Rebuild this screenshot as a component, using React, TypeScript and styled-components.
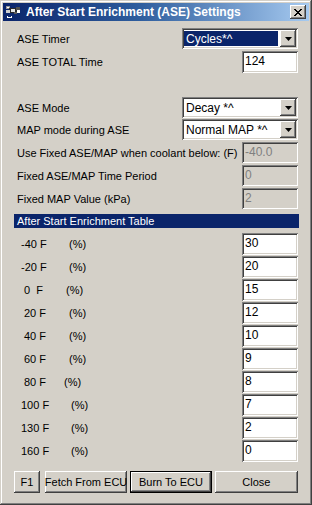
import React from 'react';
import styled, { createGlobalStyle, css } from 'styled-components';

const Global = createGlobalStyle`
  html, body { margin: 0; padding: 0; background: #D4D0C8; }
  body {
    font-family: "Liberation Sans", Arial, sans-serif;
    font-size: 11px;
    color: #000;
  }
`;

const raised = css`
  box-shadow:
    inset -1px -1px #404040,
    inset 1px 1px #FFFFFF,
    inset -2px -2px #808080,
    inset 2px 2px #D4D0C8;
`;

const sunken = css`
  box-shadow:
    inset 1px 1px #808080,
    inset -1px -1px #FFFFFF,
    inset 2px 2px #404040,
    inset -2px -2px #D4D0C8;
`;

const Window = styled.div`
  width: 312px;
  height: 505px;
  box-sizing: border-box;
  padding: 3px;
  background: #D4D0C8;
  display: flex;
  flex-direction: column;
  box-shadow:
    inset -1px -1px #404040,
    inset 1px 1px #D4D0C8,
    inset -2px -2px #808080,
    inset 2px 2px #FFFFFF;
`;

const TitleBar = styled.div`
  height: 18px;
  flex: none;
  display: flex;
  align-items: center;
  padding: 0 3px 0 2px;
  background: linear-gradient(to right, #0A246A 0%, #2F5E9E 45%, #A6CAF0 100%);
  color: #fff;
`;

const TitleText = styled.span`
  font-family: "Liberation Sans", Arial, sans-serif;
  font-weight: bold;
  font-size: 12px;
  margin-left: 5px;
  flex: 1;
  white-space: nowrap;
`;

const CloseButton = styled.div`
  width: 16px;
  height: 14px;
  background: #D4D0C8;
  display: flex;
  align-items: center;
  justify-content: center;
  ${raised}
`;

const Content = styled.div`
  flex: 1;
  display: flex;
  flex-direction: column;
  padding: 0 11px;
`;

const Row = styled.div<{ $mt: number; $h: number }>`
  display: flex;
  align-items: center;
  justify-content: space-between;
  margin-top: ${p => p.$mt}px;
  height: ${p => p.$h}px;
`;

const Label = styled.span`
  padding-left: 3px;
  white-space: nowrap;
`;

const Edit = styled.div<{ $disabled?: boolean }>`
  width: 56px;
  height: 100%;
  box-sizing: border-box;
  padding: 3px 3px 0 3px;
  background: ${p => (p.$disabled ? '#D4D0C8' : '#FFFFFF')};
  color: ${p => (p.$disabled ? '#808080' : '#000')};
  font-size: 12px;
  line-height: 15px;
  ${sunken}
`;

const Combo = styled.div`
  width: 116px;
  height: 100%;
  box-sizing: border-box;
  padding: 2px;
  background: #fff;
  display: flex;
  ${sunken}
`;

const ComboText = styled.div<{ $selected?: boolean }>`
  flex: 1;
  margin: 1px 2px 1px 0;
  padding-left: 2px;
  display: flex;
  align-items: center;
  font-size: 12px;
  background: ${p => (p.$selected ? '#0A246A' : 'transparent')};
  color: ${p => (p.$selected ? '#fff' : '#000')};
  white-space: nowrap;
`;

const DropButton = styled.div`
  width: 16px;
  background: #D4D0C8;
  display: flex;
  align-items: center;
  justify-content: center;
  ${raised}
`;

const Header = styled.div`
  margin-top: 5px;
  margin-right: -1px;
  height: 14px;
  background: #0A246A;
  color: #fff;
  padding-left: 3px;
  display: flex;
  align-items: center;
  white-space: nowrap;
`;

const Table = styled.div`
  margin-top: 5px;
  display: flex;
  flex-direction: column;
  gap: 1px;
`;

const TableRow = styled.div`
  height: 22px;
  display: flex;
  align-items: center;
`;

const TempLabel = styled.span<{ $left: number; $width: number }>`
  margin-left: ${p => p.$left}px;
  width: ${p => p.$width}px;
  white-space: pre;
  flex: none;
`;

const PctLabel = styled.span`
  flex: 1;
  white-space: nowrap;
`;

const ButtonBar = styled.div`
  margin-top: 9px;
  height: 22px;
  display: flex;
  gap: 3px;
`;

const Button = styled.div<{ $w: number; $default?: boolean; $mr?: number }>`
  width: ${p => p.$w}px;
  margin-right: ${p => p.$mr ?? 0}px;
  box-sizing: border-box;
  background: #D4D0C8;
  display: flex;
  align-items: center;
  justify-content: center;
  font-size: 11px;
  white-space: nowrap;
  ${p =>
    p.$default
      ? css`
          box-shadow:
            inset 0 0 0 1px #000,
            inset -2px -2px #404040,
            inset 2px 2px #FFFFFF,
            inset -3px -3px #808080;
        `
      : raised}
`;

const Arrow = () => (
  <svg width="7" height="4" viewBox="0 0 7 4">
    <path d="M0 0h7L3.5 4z" fill="#000" />
  </svg>
);

const AppIcon = () => (
  <svg width="16" height="16" viewBox="0 0 16 16" shapeRendering="crispEdges">
    <rect x="1" y="2" width="4" height="3" fill="#9A9A9A" />
    <rect x="2" y="3" width="2" height="1" fill="#FFFFFF" />
    <rect x="4" y="4" width="9" height="5" fill="#2A2A2A" />
    <rect x="1" y="6" width="4" height="3" fill="#D0D0D0" />
    <rect x="6" y="5" width="4" height="3" fill="#E6E6E6" />
    <rect x="11" y="3" width="4" height="3" fill="#505050" />
    <rect x="12" y="6" width="3" height="3" fill="#FFFFFF" />
    <rect x="9" y="8" width="3" height="2" fill="#5A5A5A" />
    <rect x="2" y="12" width="1" height="2" fill="#FFFFFF" />
    <rect x="2" y="13" width="5" height="1" fill="#FFFFFF" />
    <rect x="6" y="12" width="1" height="1" fill="#FFFFFF" />
  </svg>
);

const CloseX = () => (
  <svg width="8" height="7" viewBox="0 0 8 7" shapeRendering="crispEdges">
    <path
      d="M0 0h2v1h1v1h2V1h1V0h2v1H7v1H6v1H5v1h1v1h1v1h1v1H6V6H5V5H3v1H2v1H0V6h1V5h1V4h1V3H2V2H1V1H0z"
      fill="#000"
    />
  </svg>
);

const rows: { t: string; v: string; left: number; w: number }[] = [
  { t: '-40 F', v: '30', left: 7, w: 48 },
  { t: '-20 F', v: '20', left: 7, w: 48 },
  { t: '0  F', v: '15', left: 10, w: 42 },
  { t: '20 F', v: '12', left: 10, w: 45 },
  { t: '40 F', v: '10', left: 10, w: 45 },
  { t: '60 F', v: '9', left: 10, w: 45 },
  { t: '80 F', v: '8', left: 10, w: 40 },
  { t: '100 F', v: '7', left: 7, w: 50 },
  { t: '130 F', v: '2', left: 7, w: 50 },
  { t: '160 F', v: '0', left: 7, w: 50 },
];

export default function App() {
  return (
    <>
      <Global />
      <Window>
        <TitleBar>
          <AppIcon />
          <TitleText>After Start Enrichment (ASE) Settings</TitleText>
          <CloseButton>
            <CloseX />
          </CloseButton>
        </TitleBar>
        <Content>
          <Row $mt={7} $h={21}>
            <Label>ASE Timer</Label>
            <Combo>
              <ComboText $selected>Cycles*^</ComboText>
              <DropButton>
                <Arrow />
              </DropButton>
            </Combo>
          </Row>
          <Row $mt={2} $h={22}>
            <Label>ASE TOTAL Time</Label>
            <Edit>124</Edit>
          </Row>
          <Row $mt={24} $h={21}>
            <Label>ASE Mode</Label>
            <Combo>
              <ComboText>Decay *^</ComboText>
              <DropButton>
                <Arrow />
              </DropButton>
            </Combo>
          </Row>
          <Row $mt={1} $h={21}>
            <Label>MAP mode during ASE</Label>
            <Combo>
              <ComboText>Normal MAP *^</ComboText>
              <DropButton>
                <Arrow />
              </DropButton>
            </Combo>
          </Row>
          <Row $mt={2} $h={21}>
            <Label>Use Fixed ASE/MAP when coolant below: (F)</Label>
            <Edit $disabled>-40.0</Edit>
          </Row>
          <Row $mt={2} $h={21}>
            <Label>Fixed ASE/MAP Time Period</Label>
            <Edit $disabled>0</Edit>
          </Row>
          <Row $mt={2} $h={21}>
            <Label>Fixed MAP Value (kPa)</Label>
            <Edit $disabled>2</Edit>
          </Row>
          <Header>After Start Enrichment Table</Header>
          <Table>
            {rows.map(r => (
              <TableRow key={r.t}>
                <TempLabel $left={r.left} $width={r.w}>{r.t}</TempLabel>
                <PctLabel>(%)</PctLabel>
                <Edit>{r.v}</Edit>
              </TableRow>
            ))}
          </Table>
          <ButtonBar>
            <Button $w={26} $mr={2}>F1</Button>
            <Button $w={83}>Fetch From ECU</Button>
            <Button $w={82} $default>Burn To ECU</Button>
            <Button $w={84}>Close</Button>
          </ButtonBar>
        </Content>
      </Window>
    </>
  );
}
